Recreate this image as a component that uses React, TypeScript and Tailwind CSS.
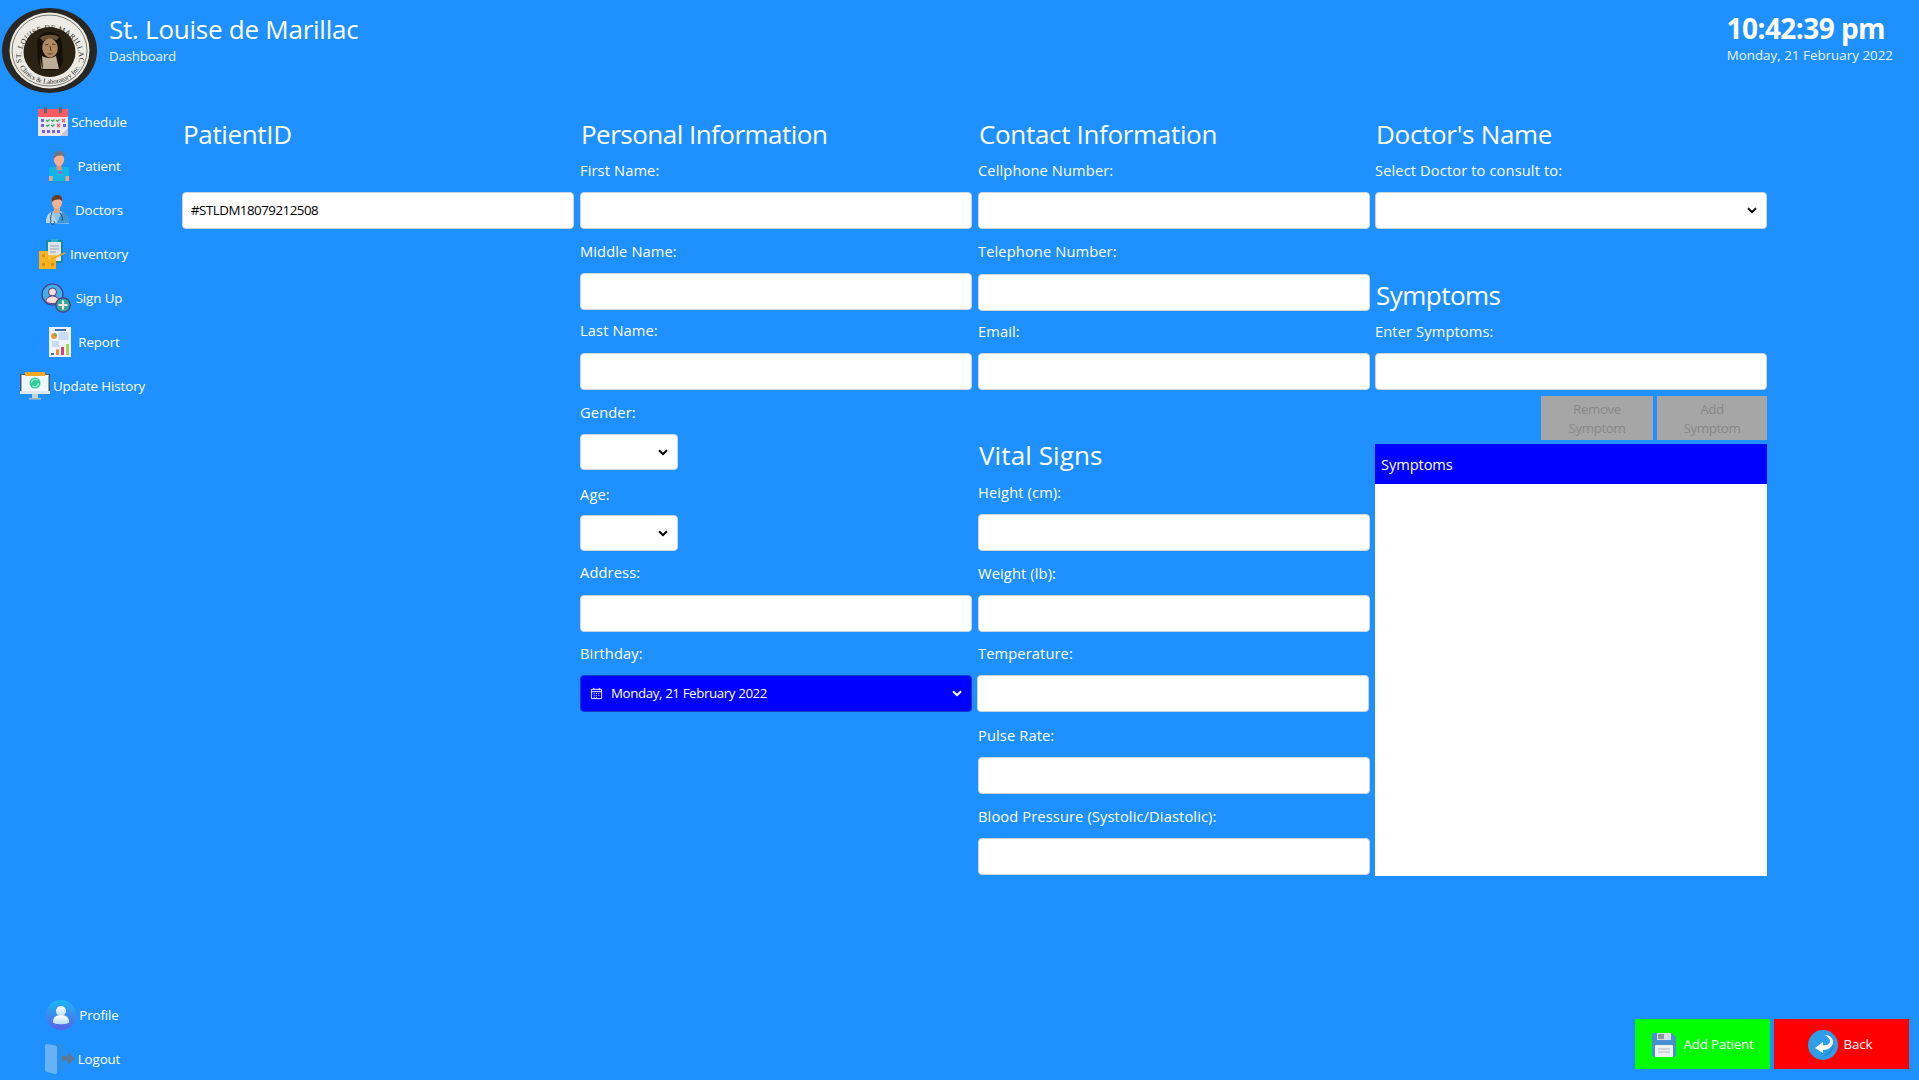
import React from "react";

const CalendarIcon = () => (
  <svg viewBox="0 0 30 30" className="w-[30px] h-[30px] shrink-0">
    <rect x="0" y="2" width="30" height="27" fill="#e9e9f6" />
    <rect x="0" y="2" width="30" height="8" rx="1" fill="#fb5a63" />
    <rect x="6" y="0" width="3" height="6" fill="#5d6a7e" />
    <rect x="21" y="0" width="3" height="6" fill="#5d6a7e" />
    <g fill="#7a5fe0">
      <rect x="3" y="12" width="3" height="3" />
      <rect x="3" y="17" width="3" height="3" />
      <rect x="4" y="23" width="3" height="3" />
      <rect x="9" y="23" width="3" height="3" />
      <rect x="14" y="23" width="3" height="3" />
      <rect x="19" y="23" width="3" height="3" />
      <rect x="25" y="17" width="3" height="3" />
    </g>
    <g stroke="#3eae5a" strokeWidth="1.2" fill="none">
      <path d="M8 13l1.5 1.5 2-2M13 13l1.5 1.5 2-2M18 13l1.5 1.5 2-2M8 18l1.5 1.5 2-2M13 18l1.5 1.5 2-2" />
    </g>
    <path d="M24 12l3 3M27 12l-3 3M19 17l3 3M22 17l-3 3" stroke="#f0545c" strokeWidth="1.2" />
    <path d="M22 29l8-8v8z" fill="#c6c6d8" />
  </svg>
);

const PatientIcon = () => (
  <svg viewBox="0 0 30 30" className="w-[30px] h-[30px] shrink-0">
    <rect x="5" y="16" width="20" height="14" rx="2" fill="#12b5e8" />
    <rect x="5" y="25" width="3.5" height="5" fill="#f3a27f" />
    <rect x="21.5" y="25" width="3.5" height="5" fill="#f3a27f" />
    <rect x="12.5" y="13" width="5" height="6" fill="#e8916e" />
    <ellipse cx="15" cy="8" rx="5.2" ry="7" fill="#f6b08f" />
    <path d="M9.8 8C9 2 12 0 15 0s6 2 5.2 6C18 3.5 12 4 9.8 8z" fill="#6e7681" />
    <circle cx="16" cy="21.500" r="1.800" fill="#a85bb0" />
  </svg>
);

const DoctorIcon = () => (
  <svg viewBox="0 0 30 30" className="w-[30px] h-[30px] shrink-0">
    <path d="M4 28c0-7 3-11 8-12h6c5 1 9 5 9 13z" fill="#8fc3e8" />
    <path d="M10 17l5 11h-11c0-6 2-10 6-11z" fill="#b8d6ea" />
    <path d="M20 17c4 1 7 5 7 11H15z" fill="#3e97d4" />
    <rect x="12" y="12" width="6" height="6" fill="#e6a078" />
    <ellipse cx="15" cy="7.5" rx="5" ry="6.5" fill="#f2b48e" />
    <path d="M10 7C9 2 12 0 15 0s6 1.5 5 6c-2-2-7-2-10 1z" fill="#6a3d25" />
    <path d="M10 17c-1 4-2 6-1 9M9 26a2 2 0 1 0 3 0M18 18c2 3 3 5 2 8" stroke="#2f5068" strokeWidth="1" fill="none" />
  </svg>
);

const InventoryIcon = () => (
  <svg viewBox="0 0 30 30" className="w-[30px] h-[30px] shrink-0">
    <rect x="9" y="1" width="17" height="23" rx="1" fill="#0d8ba8" />
    <rect x="11" y="3" width="13" height="19" fill="#dde3e6" />
    <rect x="14" y="0" width="7" height="3" fill="#2db0c8" />
    <path d="M13 7h9M13 10h9M13 13h6" stroke="#9aa5aa" strokeWidth="1.2" />
    <rect x="2" y="12" width="9" height="9" fill="#f7b21e" />
    <rect x="2" y="21" width="9" height="9" fill="#f7b21e" />
    <rect x="11" y="21" width="8" height="9" fill="#f7b21e" />
    <rect x="11" y="16" width="8" height="5" fill="#fac23a" />
    <g fill="#e08d10">
      <rect x="5" y="15" width="3" height="3" />
      <rect x="5" y="24" width="3" height="3" />
      <rect x="14" y="24" width="3" height="3" />
    </g>
    <path d="M14 20l14-6" stroke="#f0a016" strokeWidth="1.6" />
  </svg>
);

const SignUpIcon = () => (
  <svg viewBox="0 0 30 30" className="w-[30px] h-[30px] shrink-0 mr-[2px]">
    <circle cx="11.5" cy="11.5" r="10.5" fill="#3fb0ea" stroke="#51337a" strokeWidth="1.2" />
    <circle cx="11.5" cy="9" r="4" fill="#fbdcd6" stroke="#51337a" strokeWidth="1" />
    <path d="M5 19c0-4 3-6 6.500-6s6.500 2 6.500 6c-2 2-11 2-13 0z" fill="#fbdcd6" stroke="#51337a" strokeWidth="1" />
    <circle cx="22" cy="22" r="7.200" fill="#2fa89a" stroke="#51337a" strokeWidth="1.200" />
    <path d="M22 17.500v9M17.500 22h9" stroke="#fbe3de" strokeWidth="2.200" />
  </svg>
);

const ReportIcon = () => (
  <svg viewBox="0 0 30 30" className="w-[30px] h-[30px] shrink-0">
    <rect x="4" y="0" width="22" height="30" fill="#eef3fb" />
    <rect x="10" y="2" width="11" height="2" fill="#3f6db5" />
    <circle cx="9" cy="9" r="3" fill="#e79a3b" />
    <path d="M9 9V6a3 3 0 0 1 3 3z" fill="#7aa65a" />
    <path d="M13.500 6h10M13.500 8h10M13.500 10h10M13.500 12h10M7 15h7M7 17h7M7 19h7" stroke="#bcd3f2" strokeWidth="1.400" />
    <rect x="6" y="26" width="3" height="2" fill="#3f6db5" />
    <rect x="11" y="22.500" width="3" height="5.500" fill="#e88a3a" />
    <rect x="16" y="20" width="3" height="8" fill="#d8407a" />
    <rect x="21" y="17" width="3" height="11" fill="#a6d24f" />
  </svg>
);

const MonitorIcon = () => (
  <svg viewBox="0 0 30 30" className="w-[30px] h-[30px] shrink-0">
    <rect x="0" y="3" width="30" height="19" fill="#4b5a66" />
    <rect x="1.500" y="4" width="27" height="19" fill="#eef8fa" />
    <rect x="5" y="1" width="20" height="4" fill="#f5a623" />
    <rect x="0" y="20" width="30" height="3" fill="#dfe8ec" />
    <rect x="12" y="23" width="6" height="4" fill="#c3d0d6" />
    <rect x="9" y="27" width="12" height="1.500" fill="#a9bcc4" />
    <circle cx="15" cy="12" r="5.500" fill="#2fcb9a" />
    <path d="M11.500 12a3.500 3.500 0 0 1 6-2.500M18.500 12a3.500 3.500 0 0 1-6 2.500" stroke="#8af0cf" strokeWidth="1.400" fill="none" />
  </svg>
);

const ProfileIcon = () => (
  <svg viewBox="0 0 30 30" className="w-[30px] h-[30px] shrink-0">
    <defs>
      <linearGradient id="profileBg" x1="0" y1="0" x2="0" y2="1">
        <stop offset="0" stopColor="#1bb7f5" />
        <stop offset="1" stopColor="#5a63e6" />
      </linearGradient>
      <linearGradient id="profileFg" x1="0" y1="0" x2="0" y2="1">
        <stop offset="0" stopColor="#ffffff" />
        <stop offset="1" stopColor="#b8dcf8" />
      </linearGradient>
    </defs>
    <circle cx="15" cy="15" r="15" fill="url(#profileBg)" />
    <circle cx="15" cy="11" r="5" fill="url(#profileFg)" />
    <path d="M7 22c0-5 3-7 8-7s8 2 8 7c0 3-16 3-16 0z" fill="url(#profileFg)" />
  </svg>
);

const LogoutIcon = () => (
  <svg viewBox="0 0 30 30" className="w-[30px] h-[30px] shrink-0">
    <rect x="2" y="0" width="18" height="27" rx="1" fill="#2a8fe8" />
    <path d="M0 2c0-1.500 1-2 2-2l8 1.500c1 .2 2 1 2 2V28c0 1.500-1 2-2 2l-8-2c-1-.3-2-1-2-2z" fill="#66b2f5" />
    <path d="M17 12h6V8l7 6.500-7 6.500v-4h-6z" fill="#5b7c99" />
  </svg>
);

const SaveIcon = () => (
  <svg viewBox="0 0 24 24" className="w-[24px] h-[24px] shrink-0">
    <path d="M2 0h17l5 4v18a2 2 0 0 1-2 2H2a2 2 0 0 1-2-2V2a2 2 0 0 1 2-2z" fill="#4a90d0" />
    <rect x="5" y="0" width="14" height="7" fill="#d6dde2" />
    <rect x="6" y="1" width="6" height="5" fill="#8b959c" />
    <rect x="3" y="12" width="18" height="12" rx="1" fill="#eef1f3" />
    <path d="M6 16h12M6 19h12" stroke="#c3cbd1" strokeWidth="1.400" />
  </svg>
);

const BackIcon = () => (
  <svg viewBox="0 0 30 30" className="w-[30px] h-[30px] shrink-0">
    <circle cx="15" cy="15" r="15" fill="#2f9ee8" />
    <path d="M26 15A11 11 0 0 1 15 26c5-3 8-6 9-11z" fill="#1e82cb" opacity="0.7" />
    <path d="M17 5c6 0 8 4 8 7 0 5-5 8-10 8v3l-8-5 8-6v3c4 1 7-1 7-4 0-2-2-4-5-6z" fill="#ffffff" />
  </svg>
);

const Logo = () => (
  <svg viewBox="0 0 98 85" className="w-[98px] h-[85px] shrink-0 ml-[1px]">
    <defs>
      <path id="logoTop" d="M20.500 54A29 27 0 1 1 77.500 54" />
      <path id="logoBottom" d="M14 43A35 33 0 0 0 84 43" />
    </defs>
    <ellipse cx="48.500" cy="42.500" rx="47.500" ry="42.500" fill="#2a2622" />
    <ellipse cx="48.500" cy="42.500" rx="40" ry="38" fill="#ecebe4" />
    <ellipse cx="48.500" cy="42.500" rx="37.500" ry="35.500" fill="none" stroke="#2a2622" strokeWidth="0.600" />
    <ellipse cx="48.500" cy="44" rx="26" ry="25" fill="#2a2313" />
    <text fontFamily="'Liberation Serif', serif" fontSize="7.500" fill="#1d1b16" letterSpacing="0.350">
      <textPath href="#logoTop" startOffset="50%" textAnchor="middle">ST. LOUISE DE MARILLAC</textPath>
    </text>
    <text fontFamily="'Liberation Serif', serif" fontSize="7" fill="#1d1b16">
      <textPath href="#logoBottom" startOffset="50%" textAnchor="middle">Clinics &amp; Laboratory Inc.</textPath>
    </text>
    <path d="M36 36C36 28 42 24 49 24s12 4 12 12l1 18-4 8H40l-3-8z" fill="#15100a" />
    <path d="M39 30c4-4 14-4 19-1l-2 3c-4-1-10-1-14 1z" fill="#6b5436" />
    <ellipse cx="49" cy="40" rx="7.800" ry="9.500" fill="#b08a62" transform="rotate(-6 49 40)" />
    <path d="M44 37l3.500-.8M51 36l3.500.6M49 38l1 5M46.500 45.500c1.500.8 3.500.8 5-.2" stroke="#47301c" strokeWidth="0.900" fill="none" />
    <path d="M41 48c3 2 9 3 14 0l3 13H42z" fill="#bfae97" />
    <path d="M39 50l3 11h-2z" fill="#7d6a52" />
  </svg>
);

const Label = ({ children, className = "" }: { children: React.ReactNode; className?: string }) => (
  <label className={`block h-[20px] leading-[20px] text-[14.67px] tracking-[0.12px] text-white ${className}`}>{children}</label>
);

const Heading = ({ children, className = "" }: { children: React.ReactNode; className?: string }) => (
  <h2 className={`h-[48px] leading-[48px] text-[26px] pl-[1px] font-normal text-white ${className}`}>{children}</h2>
);

const Field = ({ className = "", value }: { className?: string; value?: string }) => (
  <input
    readOnly
    value={value ?? ""}
    className={`block w-[392px] bg-white rounded-[4px] border border-[#ced4da] px-[8px] pb-[2px] text-[13.33px] tracking-[-0.5px] text-black outline-none ${className}`}
  />
);

const Chevron = ({ className = "" }: { className?: string }) => (
  <svg viewBox="0 0 10 7" className={`w-[10px] h-[7px] ${className}`}>
    <path d="M1 1.200l4 4 4-4" fill="none" stroke="currentColor" strokeWidth="2" />
  </svg>
);

const Select = ({ className = "" }: { className?: string }) => (
  <div className={`relative ${className}`}>
    <select className="block w-full h-full appearance-none bg-white rounded-[4px] border border-[#ced4da] outline-none" />
    <Chevron className="absolute right-[10px] top-[15px] text-black pointer-events-none" />
  </div>
);

const NavItem = ({ icon, label }: { icon: React.ReactNode; label: string }) => (
  <a className="grid grid-cols-[1fr_auto_1fr] items-center h-[44px] gap-[3px] text-white">
    <span className="flex justify-end">{icon}</span>
    <span className="text-[13.33px] tracking-[-0.1px] leading-[18px]">{label}</span>
    <span />
  </a>
);

export default function App() {
  return (
    <div className="w-[1919px] h-[1080px] overflow-hidden flex flex-col bg-[#1e90ff] text-white font-['Open_Sans','Noto_Sans',sans-serif]">
      <header className="h-[100px] shrink-0 flex items-start justify-between">
        <div className="flex pt-[8px]">
          <Logo />
          <div className="ml-[10px] mt-[1px]">
            <h1 className="text-[26px] leading-[40px] tracking-[-0.25px] font-normal">St. Louise de Marillac</h1>
            <p className="text-[13.33px] leading-[14px] tracking-[-0.2px] text-[#e8f3ff]">Dashboard</p>
          </div>
        </div>
        <div className="pt-[10px] pr-[26px] text-right">
          <div className="text-[28px] leading-[36px] font-bold tracking-[-0.55px] pr-[8px]">10:42:39 pm</div>
          <div className="text-[13.33px] leading-[18px] tracking-[0.03px] text-[#e8f3ff]">Monday, 21 February 2022</div>
        </div>
      </header>

      <div className="flex-1 flex min-h-0">
        <aside className="w-[182px] shrink-0 pl-[16px] flex flex-col justify-between">
          <nav className="flex flex-col">
            <NavItem icon={<CalendarIcon />} label="Schedule" />
            <NavItem icon={<PatientIcon />} label="Patient" />
            <NavItem icon={<DoctorIcon />} label="Doctors" />
            <NavItem icon={<InventoryIcon />} label="Inventory" />
            <NavItem icon={<SignUpIcon />} label="Sign Up" />
            <NavItem icon={<ReportIcon />} label="Report" />
            <NavItem icon={<MonitorIcon />} label="Update History" />
          </nav>
          <nav className="flex flex-col translate-y-[1px]">
            <NavItem icon={<ProfileIcon />} label="Profile" />
            <NavItem icon={<LogoutIcon />} label="Logout" />
          </nav>
        </aside>

        <main className="flex-1 flex flex-col">
          <form className="flex gap-[6px] pt-[10px]">
            <section className="w-[392px]">
              <Heading className="tracking-[-0.35px]">PatientID</Heading>
              <Field value="#STLDM18079212508" className="mt-[34px] h-[37px]" />
            </section>

            <section className="w-[392px]">
              <Heading className="tracking-[-0.52px]">Personal Information</Heading>
              <Label className="mt-[2px]">First Name:</Label>
              <Field className="mt-[12px] h-[37px]" />
              <Label className="mt-[12px]">Middle Name:</Label>
              <Field className="mt-[12px] h-[37px]" />
              <Label className="mt-[10px]">Last Name:</Label>
              <Field className="mt-[13px] h-[37px]" />
              <Label className="mt-[12px]">Gender:</Label>
              <Select className="mt-[12px] w-[98px] h-[36px]" />
              <Label className="mt-[14px]">Age:</Label>
              <Select className="mt-[11px] w-[98px] h-[36px]" />
              <Label className="mt-[11px]">Address:</Label>
              <Field className="mt-[13px] h-[37px]" />
              <Label className="mt-[11px]">Birthday:</Label>
              <div className="mt-[12px] h-[37px] flex items-center rounded-[4px] bg-[#0000ff] border border-[#0a3fd0] pl-[9px] pr-[9px]">
                <svg viewBox="0 0 14 14" className="w-[13px] h-[13px] shrink-0" fill="none" stroke="white" strokeWidth="1">
                  <path d="M1.500 2.500h11v10h-11zM1.500 5h11M4 1v2M10 1v2" />
                  <path d="M4 7h1M6.500 7h1M9 7h1M4 9h1M6.500 9h1M9 9h1M4 11h1M6.500 11h1" />
                </svg>
                <span className="ml-[8px] flex-1 text-[13.33px] tracking-[-0.4px]">Monday, 21 February 2022</span>
                <Chevron className="text-white" />
              </div>
            </section>

            <section className="w-[392px]">
              <Heading className="tracking-[-0.33px]">Contact Information</Heading>
              <Label className="mt-[2px]">Cellphone Number:</Label>
              <Field className="mt-[12px] h-[37px]" />
              <Label className="mt-[12px]">Telephone Number:</Label>
              <Field className="mt-[13px] h-[37px]" />
              <Label className="mt-[10px]">Email:</Label>
              <Field className="mt-[12px] h-[37px]" />
              <Heading className="mt-[41px] tracking-[0.1px]">Vital Signs</Heading>
              <Label className="mt-[3px]">Height (cm):</Label>
              <Field className="mt-[12px] h-[37px]" />
              <Label className="mt-[12px]">Weight (lb):</Label>
              <Field className="mt-[12px] h-[37px]" />
              <Label className="mt-[11px]">Temperature:</Label>
              <Field className="mt-[12px] h-[37px] -ml-[1px]" />
              <Label className="mt-[13px]">Pulse Rate:</Label>
              <Field className="mt-[12px] h-[37px]" />
              <Label className="mt-[12px]">Blood Pressure (Systolic/Diastolic):</Label>
              <Field className="mt-[12px] h-[37px]" />
            </section>

            <section className="w-[392px] -ml-[1px]">
              <Heading className="tracking-[-0.3px]">Doctor's Name</Heading>
              <Label className="mt-[2px]">Select Doctor to consult to:</Label>
              <Select className="mt-[12px] w-[392px] h-[37px]" />
              <Heading className="mt-[42px] tracking-[-0.52px]">Symptoms</Heading>
              <Label className="mt-[2px]">Enter Symptoms:</Label>
              <Field className="mt-[12px] h-[37px]" />
              <div className="mt-[6px] flex justify-end gap-[4px]">
                <button type="button" disabled className="w-[112px] h-[44px] pt-[1px] bg-[#a6a6a6] text-[#888888] text-[13.33px] leading-[19px] tracking-[-0.4px]">Remove<br />Symptom</button>
                <button type="button" disabled className="w-[110px] h-[44px] pt-[1px] bg-[#a6a6a6] text-[#888888] text-[13.33px] leading-[19px] tracking-[-0.4px]">Add<br />Symptom</button>
              </div>
              <div className="mt-[4px] h-[432px] bg-white flex flex-col">
                <div className="h-[40px] bg-[#0000ff] flex items-center px-[6px] text-[14.67px] tracking-[-0.1px] text-white">Symptoms</div>
              </div>
            </section>
          </form>

          <div className="mt-auto flex justify-end gap-[4px] pr-[10px] pb-[11px]">
            <button type="button" className="w-[135px] h-[50px] pt-[2px] bg-[#00ff00] flex items-center justify-center gap-[8px] text-[13.33px] tracking-[-0.2px] text-white">
              <SaveIcon />
              Add Patient
            </button>
            <button type="button" className="w-[135px] h-[50px] pt-[2px] bg-[#ff0000] flex items-center justify-center gap-[5px] pr-[2px] text-[13.33px] tracking-[-0.1px] text-white">
              <BackIcon />
              Back
            </button>
          </div>
        </main>
      </div>
    </div>
  );
}
